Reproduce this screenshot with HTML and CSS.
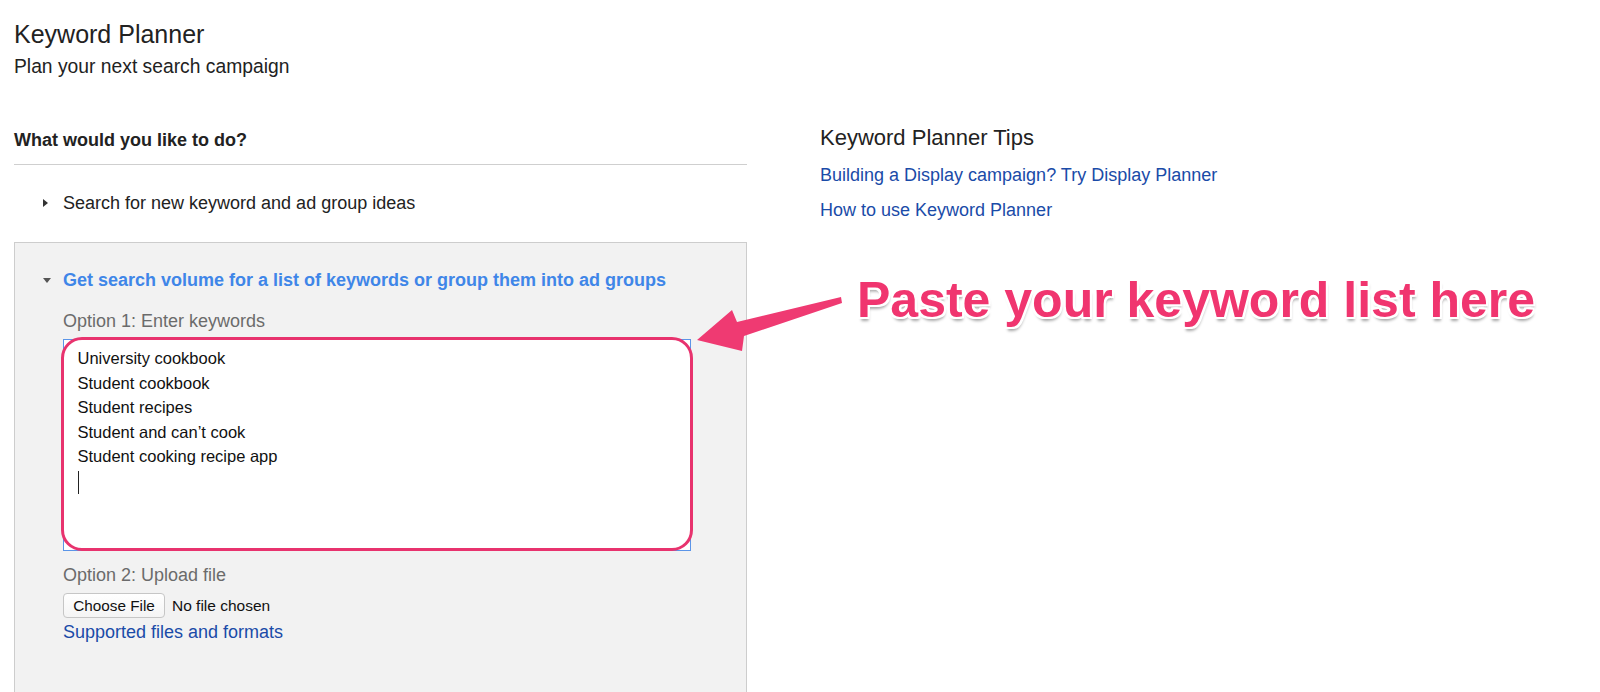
FILE: index.html
```html
<!DOCTYPE html>
<html lang="en">
  <head>
    <meta charset="UTF-8" />
    <meta name="viewport" content="width=device-width,initial-scale=1.0" />
    <title>Keyword Planner</title>
    <link rel="stylesheet" href="styles.css">
  </head>
  <body>
    <div class="page">
      <header class="page-head">
        <h1>Keyword Planner</h1>
        <p>Plan your next search campaign</p>
      </header>

      <div class="columns">
        <main class="left">
          <h2 class="what">What would you like to do?</h2>
          <div class="option-row">
            <span class="caret-right"></span>
            Search for new keyword and ad group ideas
          </div>

          <section class="panel">
            <div class="panel-title">
              <span class="caret-down"></span>
              Get search volume for a list of keywords or group them into ad groups
            </div>
            <div class="field-label">Option 1: Enter keywords</div>
            <div class="kw-wrap">
              <div class="kw-box">
                <div>University cookbook</div>
                <div>Student cookbook</div>
                <div>Student recipes</div>
                <div>Student and can’t cook</div>
                <div>Student cooking recipe app</div>
                <div><span class="text-caret"></span></div>
              </div>
              <div class="highlight"></div>
            </div>
            <div class="field-label second">Option 2: Upload file</div>
            <div class="file-row">
              <button class="file-btn">Choose File</button>
              <span>No file chosen</span>
            </div>
            <a class="link" href="#">Supported files and formats</a>
          </section>
        </main>

        <aside class="tips">
          <h3>Keyword Planner Tips</h3>
          <a class="link" href="#">Building a Display campaign? Try Display Planner</a>
          <a class="link" href="#">How to use Keyword Planner</a>
        </aside>
      </div>

      <div class="annotation">Paste your keyword list here</div>
      <svg class="arrow" width="160" height="80" viewBox="690 280 160 80">
        <polygon points="697,340 732,310 737,322 841,297 842,303 744,336 742,351" fill="#ef3a72"/>
      </svg>
    </div>
  </body>
</html>
```

FILE: styles.css
```css
html, body {
  margin: 0;
  height: 100%;
  overflow: hidden;
}
body {
  font-family: "Liberation Sans", Arial, sans-serif;
  color: #222;
  background: #fff;
}
.page {
  position: relative;
  padding: 20px 0 0 14px;
}
.page-head h1 {
  margin: 0;
  font-size: 25px;
  line-height: 28px;
  font-weight: normal;
}
.page-head p {
  margin: 8px 0 0;
  font-size: 19.3px;
  line-height: 22px;
}
.columns {
  display: flex;
  gap: 73px;
}
.left {
  width: 733px;
  padding-top: 51px;
}
.what {
  margin: 0;
  font-size: 18px;
  line-height: 22px;
  font-weight: bold;
  padding-bottom: 13px;
  border-bottom: 1px solid #cfcfcf;
}
.option-row {
  display: flex;
  align-items: center;
  margin-top: 27px;
  padding-left: 29px;
  font-size: 18px;
  line-height: 22px;
}
.caret-right {
  width: 0;
  height: 0;
  border-top: 4.5px solid transparent;
  border-bottom: 4.5px solid transparent;
  border-left: 5px solid #333;
  margin-right: 15px;
}
.caret-down {
  width: 0;
  height: 0;
  border-left: 4px solid transparent;
  border-right: 4px solid transparent;
  border-top: 5px solid #555;
  margin-right: 12px;
}
.panel {
  margin-top: 28px;
  height: 423px;
  background: #f2f2f2;
  border: 1px solid #cdcdcd;
  border-bottom: none;
  padding: 26px 0 0 48px;
}
.panel-title {
  display: flex;
  align-items: center;
  margin-left: -20px;
  font-size: 18px;
  line-height: 22px;
  font-weight: bold;
  color: #3f86e8;
}
.field-label {
  margin-top: 19px;
  font-size: 18px;
  line-height: 22px;
  color: #6b6b6b;
}
.field-label.second {
  margin-top: 13px;
}
.kw-wrap {
  position: relative;
  margin-top: 7px;
  width: 628px;
}
.kw-box {
  box-sizing: border-box;
  height: 212px;
  background: #fff;
  border: 1px solid #5b95e8;
  padding: 6px 13px 0 13.5px;
  font-size: 16.5px;
  line-height: 24.5px;
  color: #111;
}
.text-caret {
  display: inline-block;
  width: 1px;
  height: 23px;
  background: #222;
  vertical-align: middle;
}
.highlight {
  position: absolute;
  left: -2px;
  top: -2px;
  right: -2px;
  bottom: 0;
  border: 3px solid #e8336e;
  border-radius: 21px;
}
.file-row {
  display: flex;
  align-items: center;
  margin-top: 7px;
  font-size: 15.5px;
  color: #111;
}
.file-btn {
  height: 25px;
  width: 102px;
  padding: 0;
  margin-right: 7px;
  font-family: inherit;
  font-size: 15.3px;
  color: #111;
  background: linear-gradient(#fff, #f4f4f4);
  border: 1px solid #c6c6c6;
  border-radius: 4px;
}
.link {
  display: block;
  color: #1a4ba8;
  text-decoration: none;
  font-size: 18px;
  line-height: 22px;
}
.panel .link {
  margin-top: 3px;
}
.tips {
  padding-top: 47px;
}
.tips h3 {
  margin: 0 0 13px;
  font-size: 22px;
  line-height: 26px;
  font-weight: normal;
  color: #222;
}
.tips .link {
  margin-bottom: 13px;
}
.annotation {
  position: absolute;
  left: 857px;
  top: 272px;
  font-size: 50px;
  line-height: 56px;
  font-weight: bold;
  color: #f0356f;
  text-shadow:
    2px 0 0 #fff, -2px 0 0 #fff, 0 2px 0 #fff, 0 -2px 0 #fff,
    2px 2px 0 #fff, -2px -2px 0 #fff, 2px -2px 0 #fff, -2px 2px 0 #fff,
    1px 4px 3px rgba(0, 0, 0, 0.35);
}
.arrow {
  position: absolute;
  left: 690px;
  top: 280px;
}
```
